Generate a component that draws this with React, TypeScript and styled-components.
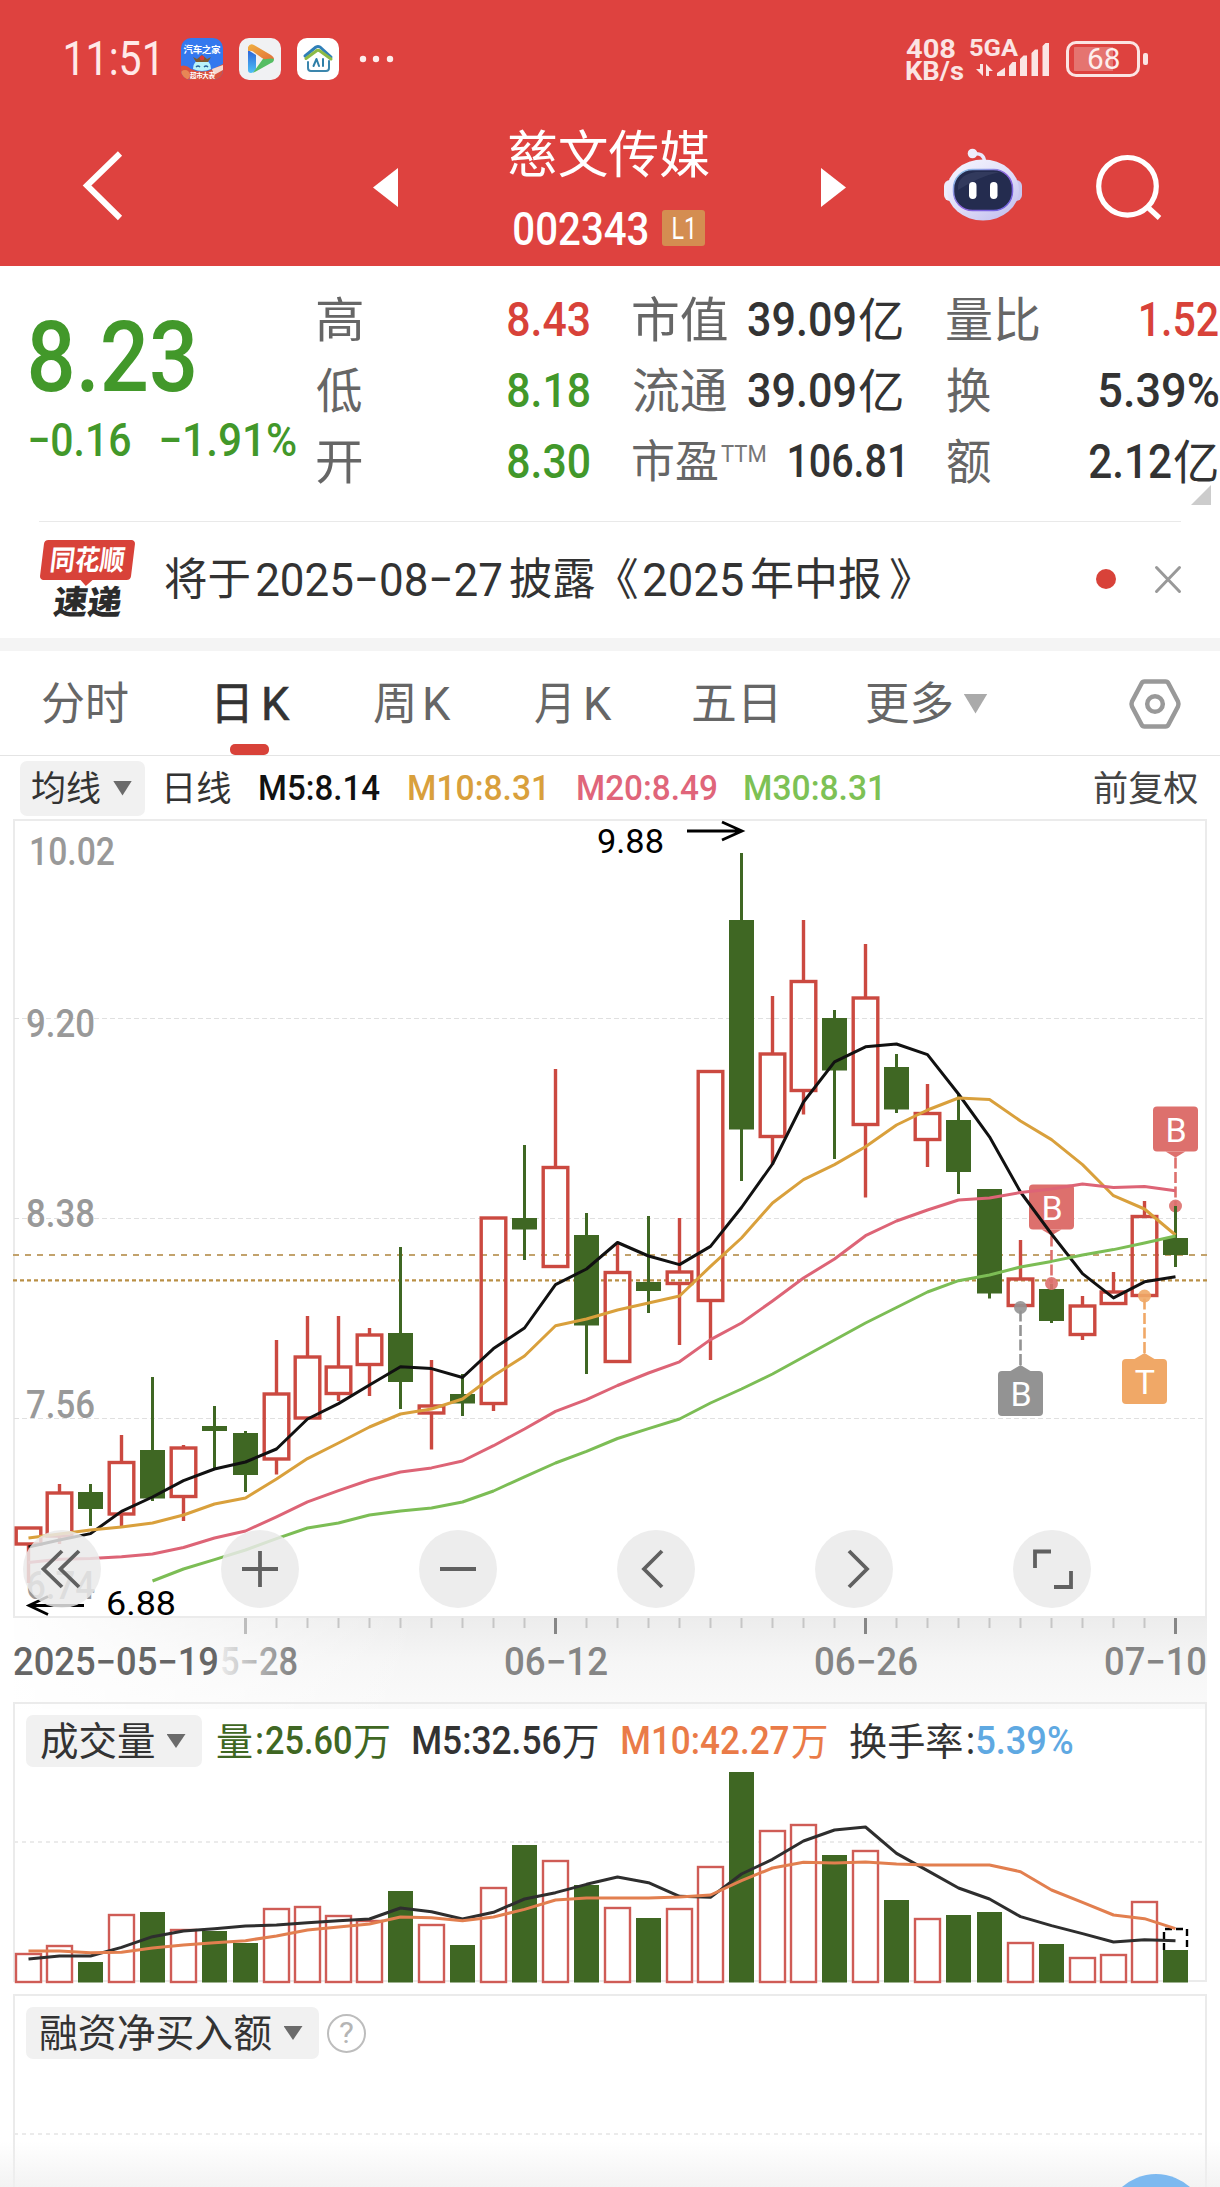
import React, { useLayoutEffect, useRef, useState } from 'react';
import styled, { createGlobalStyle } from 'styled-components';

const FONT = 'Roboto, "Noto Sans CJK SC", sans-serif';
const RED = '#d84239';
const GREEN = '#42982a';
const DARK = '#333333';
const BAR_GREEN = '#3f6723';

const Global = createGlobalStyle`
  html, body { margin: 0; background: #fff; }
  body { font-family: ${FONT}; width: 1220px; overflow: hidden; }
  * { box-sizing: border-box; }
  svg { display: block; flex: none; overflow: visible; }
`;

/* ---------- condensed text: inked width is fixed, glyphs are squeezed to it ---------- */

const FitBox = styled.span<{ $w: number; $size: number; $weight: number; $color: string; $ml: number; $up: number }>`
  display: block;
  flex: none;
  width: ${(p) => p.$w}px;
  height: ${(p) => p.$size}px;
  line-height: ${(p) => p.$size}px;
  font-size: ${(p) => p.$size}px;
  font-weight: ${(p) => p.$weight};
  color: ${(p) => p.$color};
  margin-left: ${(p) => p.$ml}px;
  margin-top: ${(p) => p.$up}px;
  white-space: nowrap;
`;
const FitInner = styled.span`
  display: inline-block;
  transform-origin: 0 50%;
`;

type FitProps = { w: number; size: number; weight?: number; color?: string; ml?: number; up?: number; children: string };

function Fit({ w, size, weight = 400, color = DARK, ml = 0, up = 0, children }: FitProps) {
  const ref = useRef<HTMLSpanElement>(null);
  const [t, setT] = useState('none');
  useLayoutEffect(() => {
    const ctx = document.createElement('canvas').getContext('2d');
    if (!ctx || !ref.current) return;
    ctx.font = `${weight} ${size}px ${FONT}`;
    const m = ctx.measureText(children);
    const ink = m.actualBoundingBoxLeft + m.actualBoundingBoxRight;
    // Han glyphs sit a little high next to the figures, so they are lowered
    const drop = /[\u3000-\u9fff]/.test(children) ? size * 0.028 : 0;
    if (ink > 0) setT(`scaleX(${w / ink}) translate(${m.actualBoundingBoxLeft}px, ${drop}px)`);
  }, [w, size, weight, children]);
  return (
    <FitBox $w={w} $size={size} $weight={weight} $color={color} $ml={ml} $up={up}>
      <FitInner ref={ref} style={{ transform: t }}>{children}</FitInner>
    </FitBox>
  );
}

/* ---------- header ---------- */

const Page = styled.main`
  width: 1220px;
  height: 2187px;
  overflow: hidden;
  background: #fff;
`;
const Header = styled.header`
  height: 266px;
  background: #de423f;
`;
const StatusBar = styled.div`
  height: 84px;
  padding: 34px 80px 0 66px;
  display: flex;
  justify-content: space-between;
`;
const StatusGroup = styled.div`
  display: flex;
  align-items: center;
  height: 50px;
`;
const AppIcons = styled.div`
  display: flex;
  gap: 16px;
  margin: 0 22px 0 24px;
`;
const Speed = styled.div`
  display: flex;
  flex-direction: column;
  width: 64px;
`;
const Battery = styled.div`
  position: relative;
  display: flex;
  align-items: center;
  justify-content: center;
  width: 74px;
  height: 36px;
  margin-left: 16px;
  border: 3.5px solid #fbe4e3;
  border-radius: 10px;
  background: linear-gradient(90deg, transparent 5px, #e57470 5px, #e57470 44px, transparent 44px) content-box;
  padding: 3px 0;
  &::after {
    content: '';
    position: absolute;
    right: -11px;
    top: 9px;
    width: 5px;
    height: 12px;
    border-radius: 2px;
    background: #fbe4e3;
  }
`;
const NavBar = styled.nav`
  display: flex;
  height: 182px;
`;
const NavTitle = styled.div`
  display: flex;
  flex-direction: column;
  width: 202px;
  margin: 44px 110px 0 111px;
`;
const CodeRow = styled.div`
  display: flex;
  align-items: center;
  height: 36px;
  margin: 30px 0 0 5px;
`;
const Level = styled.div`
  display: flex;
  align-items: center;
  justify-content: center;
  width: 43px;
  height: 36px;
  margin-left: 14px;
  border-radius: 3px;
  background: #d48d51;
`;
const NavIcon = styled.svg<{ $l: number; $t: number }>`
  margin: ${(p) => p.$t}px 0 0 ${(p) => p.$l}px;
`;

function StatusIcons() {
  return (
    <AppIcons>
      <svg width="42" height="42" viewBox="0 0 42 42">
        <defs>
          <clipPath id="appClip"><rect width="42" height="42" rx="10" /></clipPath>
        </defs>
        <g clipPath="url(#appClip)">
          <rect width="42" height="42" fill="#3478ee" />
          <path d="M0 28 Q5 26 10 31 Q21 36 32 31 L42 26 V42 H0 Z" fill="#d9503d" />
          <path d="M31 31 L42 27 V32 L33 37 Z" fill="#f4d9d0" />
          <circle cx="4" cy="37" r="5" fill="#e88655" />
          <path d="M12 31 Q12 22 21 22 Q30 22 30 31 Q21 35 12 31 Z" fill="#b9f2fa" />
          <path d="M15 29q2-2 4 0M23 29q2-2 4 0" stroke="#26629b" strokeWidth="1.4" fill="none" />
          <path d="M12 19l3 5h12l3-5-4 2-5-4-5 4z" fill="#7d5a2e" />
          <circle cx="21" cy="20" r="2.4" fill="#d63a3a" />
          <text x="2.5" y="14.5" fontSize="9.5" fontWeight="700" fill="#fff" textLength="37">汽车之家</text>
          <text x="9" y="40" fontSize="6.5" fontWeight="700" fill="#fff" textLength="25">超市大表</text>
        </g>
      </svg>
      <svg width="42" height="42" viewBox="0 0 42 42">
        <defs>
          <linearGradient id="pb" x1="0" y1="0" x2="0" y2="1"><stop offset="0" stopColor="#2b63d9" /><stop offset="1" stopColor="#4fc0f5" /></linearGradient>
          <linearGradient id="po" x1="0" y1="0" x2="1" y2="1"><stop offset="0" stopColor="#f0b040" /><stop offset="1" stopColor="#e2713a" /></linearGradient>
        </defs>
        <rect width="42" height="42" rx="10" fill="#f0f1f3" />
        <path d="M9 12 L17 17 V31 Q16 34 12 35 Q9 35 9 32 Z" fill="url(#pb)" />
        <path d="M16 32 L26 18 Q34 18 35 21 Q35 24 32 25 L14 35 Z" fill="#55bd63" />
        <path d="M9 13 V9 Q11 5 15 7 L32 17 Q35 19 35 21 Q33 20 27 21 Q26 22 23 20 L16 15 Q13 12 9 13 Z" fill="url(#po)" />
      </svg>
      <svg width="42" height="42" viewBox="0 0 42 42" fill="none" strokeLinecap="round" strokeLinejoin="round">
        <rect width="42" height="42" rx="10" fill="#fff" />
        <path d="M8 18 L19 9 Q21 8 23 9 L34 19" stroke="#2f7fb8" strokeWidth="3" />
        <path d="M9 20.5 L20 12.5 Q21.500 12 23 13 L34 21" stroke="#8dbb46" strokeWidth="3" />
        <path d="M11 24 V30 Q11 33 14 33 H29 Q32 33 32 30 V23" stroke="#3b86ad" strokeWidth="2" />
        <path d="M16.500 28 L19.500 21 L22 28 M26 21 V28" stroke="#2f7fa8" strokeWidth="2" />
      </svg>
    </AppIcons>
  );
}

function HeaderArea() {
  return (
    <Header>
      <StatusBar>
        <StatusGroup>
          <Fit w={91} size={48} color="#ffe9e8">11:51</Fit>
          <StatusIcons />
          <svg width="32" height="8" viewBox="0 0 32 8" fill="#fdeceb">
            <circle cx="2" cy="4" r="3.2" /><circle cx="15" cy="4" r="3.2" /><circle cx="29" cy="4" r="3.2" />
          </svg>
        </StatusGroup>
        <StatusGroup>
          <Speed>
            <Fit w={49} size={26} weight={700} color="#fbe4e3" up={2}>408</Fit>
            <Fit w={57} size={25} weight={700} color="#fbe4e3" up={-3}>KB/s</Fit>
          </Speed>
          <svg width="80" height="42" viewBox="971 38 80 42" fill="#fbe4e3">
            <text x="970" y="56" fontSize="24" fontWeight="700" textLength="49" lengthAdjust="spacingAndGlyphs" fontFamily="Roboto">5GA</text>
            <path d="M981 64h3v12l-7-7h4zM987 64l7 7h-4v5h-3z" />
            <path d="M998 76V73l8-5.500V76zM1010 76V66l3.500-4H1017V76zM1021 76V59l3.500-3.500H1028V76z" />
            <path d="M1032.500 76V53l3.500-3.500h3V76zM1043.500 76V46l3-3h3.500V76z" />
          </svg>
          <Battery><Fit w={31} size={29} color="#fdeeed">68</Fit></Battery>
        </StatusGroup>
      </StatusBar>
      <NavBar>
        <NavIcon $l={82} $t={66} width="42" height="72" viewBox="82 150 42 72" fill="none" stroke="#fff" strokeWidth="6">
          <path d="M120 153.500L87 185.500L120 218" />
        </NavIcon>
        <NavIcon $l={248.500} $t={84} width="25" height="39" viewBox="0 0 25 39" fill="#fff"><path d="M0 19.500L25 0V39z" /></NavIcon>
        <NavTitle>
          <Fit w={200} size={51} color="#fff" up={1}>慈文传媒</Fit>
          <CodeRow>
            <Fit w={134} size={47} weight={500} color="#fff">002343</Fit>
            <Level><Fit w={20} size={31} color="#fff">L1</Fit></Level>
          </CodeRow>
        </NavTitle>
        <NavIcon $l={0} $t={84} width="25" height="39" viewBox="0 0 25 39" fill="#fff"><path d="M25 19.500L0 0V39z" /></NavIcon>
        <NavIcon $l={98} $t={64} width="78" height="73" viewBox="944 148 78 73">
          <defs>
            <linearGradient id="shell" x1="0" y1="0" x2="0.8" y2="1"><stop offset="0" stopColor="#f7f7ff" /><stop offset="0.6" stopColor="#dedcf8" /><stop offset="1" stopColor="#c3c0ee" /></linearGradient>
            <linearGradient id="rim" x1="0" y1="0" x2="1" y2="1"><stop offset="0" stopColor="#8fd6ea" /><stop offset="0.5" stopColor="#8d63dd" /><stop offset="1" stopColor="#6a63e0" /></linearGradient>
          </defs>
          <path d="M973 154 Q984 152 984.500 162" fill="none" stroke="#e9e8fb" strokeWidth="3.500" />
          <circle cx="972.500" cy="153.500" r="4.800" fill="#eeeefc" />
          <rect x="944" y="180" width="14" height="21" rx="6" fill="#edecfb" />
          <rect x="1008" y="180" width="14" height="21" rx="6" fill="#c9c7f0" />
          <ellipse cx="983" cy="190" rx="36" ry="30.500" fill="url(#shell)" />
          <rect x="953.500" y="169.500" width="59" height="41" rx="19" fill="#242c4f" stroke="url(#rim)" strokeWidth="1.500" />
          <path d="M958 186 Q960 174 976 172 L1000 172 Q980 176 958 190Z" fill="#3c4567" opacity=".6" />
          <rect x="969" y="182" width="7.500" height="17" rx="3.700" fill="#fff" />
          <rect x="990" y="182" width="7.500" height="17" rx="3.700" fill="#fff" />
        </NavIcon>
        <NavIcon $l={74} $t={70} width="66" height="66" viewBox="1096 154 66 66" fill="none" stroke="#fff" strokeWidth="5.200">
          <circle cx="1127.500" cy="186.300" r="28.800" /><path d="M1147.500 207L1159.500 218" />
        </NavIcon>
      </NavBar>
    </Header>
  );
}

/* ---------- quote ---------- */

const Quote = styled.section`
  position: relative;
  display: flex;
  height: 255px;
`;
const PriceBlock = styled.div`
  flex: none;
  width: 317px;
  padding: 43px 0 0 30px;
`;
const ChangeRow = styled.div`
  display: flex;
  gap: 30px;
  margin-top: 10px;
`;
const StatColumn = styled.div<{ $w: number; $ml: number }>`
  flex: none;
  width: ${(p) => p.$w}px;
  margin-left: ${(p) => p.$ml}px;
  padding-top: 18px;
`;
const StatRow = styled.div`
  display: flex;
  justify-content: space-between;
  align-items: center;
  height: 71px;
`;
const Run = styled.div`
  display: flex;
  align-items: center;
`;
const Corner = styled.i`
  position: absolute;
  right: 9px;
  bottom: 16px;
  width: 20px;
  height: 20px;
  background: #ccc;
  clip-path: polygon(100% 0, 100% 100%, 0 100%);
`;

const Label = ({ w, children }: { w: number; children: string }) => <Fit w={w} size={48} color="#666">{children}</Fit>;
const Value = ({ w, color = DARK, unit, children }: { w: number; color?: string; unit?: boolean; children: string }) => (
  <Run>
    <Fit w={w} size={49} weight={500} color={color}>{children}</Fit>
    {unit && <Fit w={43.500} size={47} color={DARK} ml={4}>亿</Fit>}
  </Run>
);

function QuoteArea() {
  return (
    <Quote>
      <PriceBlock>
        <Fit w={164} size={98} weight={500} color={GREEN}>8.23</Fit>
        <ChangeRow>
          <Fit w={100.500} size={46} weight={500} color={GREEN}>−0.16</Fit>
          <Fit w={134.500} size={46} weight={500} color={GREEN}>−1.91%</Fit>
        </ChangeRow>
      </PriceBlock>
      <StatColumn $w={272.500} $ml={0}>
        <StatRow><Label w={44.500}>高</Label><Value w={81.500} color={RED}>8.43</Value></StatRow>
        <StatRow><Label w={44.500}>低</Label><Value w={81.500} color={GREEN}>8.18</Value></StatRow>
        <StatRow><Label w={44.500}>开</Label><Value w={81.500} color={GREEN}>8.30</Value></StatRow>
      </StatColumn>
      <StatColumn $w={269.500} $ml={43}>
        <StatRow><Label w={93.500}>市值</Label><Value w={106.500} unit>39.09</Value></StatRow>
        <StatRow><Label w={93.500}>流通</Label><Value w={106.500} unit>39.09</Value></StatRow>
        <StatRow>
          <Run>
            <Fit w={85} size={45} color="#666">市盈</Fit>
            <Fit w={44} size={24} color="#777" ml={3} up={-16}>TTM</Fit>
          </Run>
          <Fit w={113.500} size={45.500} weight={500}>106.81</Fit>
        </StatRow>
      </StatColumn>
      <StatColumn $w={271} $ml={44.500}>
        <StatRow><Label w={92}>量比</Label><Value w={76.500} color={RED}>1.52</Value></StatRow>
        <StatRow><Label w={43.500}>换</Label><Value w={118}>5.39%</Value></StatRow>
        <StatRow><Label w={43.500}>额</Label><Value w={81.500} unit>2.12</Value></StatRow>
      </StatColumn>
      <Corner />
    </Quote>
  );
}

/* ---------- notice ---------- */

const Notice = styled.section`
  display: flex;
  align-items: center;
  height: 117px;
  margin: 0 39px;
  padding-bottom: 2px;
  border-top: 1px solid #e9e9e9;
`;
const Brand = styled.div`
  width: 91px;
  height: 78px;
  margin: 0 32px 0 3px;
`;
const BrandTag = styled.div`
  position: relative;
  display: flex;
  align-items: center;
  justify-content: center;
  height: 40px;
  border-radius: 4px;
  background: ${RED};
  transform: skewX(-7deg);
  &::after {
    content: '';
    position: absolute;
    left: 40px;
    top: 39px;
    border: 7px solid transparent;
    border-top-color: ${RED};
  }
`;
const BrandSub = styled.div`
  display: flex;
  justify-content: center;
  margin-top: 5px;
  transform: skewX(-7deg);
`;
const Dot = styled.i`
  width: 20px;
  height: 20px;
  margin: 0 39px 0 auto;
  border-radius: 50%;
  background: ${RED};
`;
const Strip = styled.div`
  height: 13px;
  background: #f4f4f4;
`;

function NoticeArea() {
  return (
    <Notice>
      <Brand>
        <BrandTag><Fit w={72} size={28} weight={700} color="#fff">同花顺</Fit></BrandTag>
        <BrandSub><Fit w={68} size={33} weight={900} color="#2c2c2c">速递</Fit></BrandSub>
      </Brand>
      <Fit w={84} size={44}>将于</Fit>
      <Fit w={244.500} size={47} ml={8}>2025−08−27</Fit>
      <Fit w={84.500} size={44} ml={8.500}>披露</Fit>
      <Fit w={20.500} size={44} ml={22}>《</Fit>
      <Fit w={99} size={47} ml={7}>2025</Fit>
      <Fit w={129} size={44} ml={8.500}>年中报</Fit>
      <Fit w={20.500} size={44} ml={9}>》</Fit>
      <Dot />
      <svg width="26" height="27" viewBox="0 0 26 27" stroke="#999" strokeWidth="3" strokeLinecap="round"><path d="M1.500 1.500L24.500 25.500M24.500 1.500L1.500 25.500" /></svg>
    </Notice>
  );
}

/* ---------- tabs ---------- */

const Tabs = styled.nav`
  display: flex;
  height: 105px;
  padding-left: 42px;
  border-bottom: 1px solid #e4e4e4;
`;
const Tab = styled.div<{ $ml: number; $active?: boolean }>`
  position: relative;
  display: flex;
  align-items: center;
  height: 105px;
  margin-left: ${(p) => p.$ml}px;
  ${(p) => p.$active && `
    -webkit-text-stroke: 0.6px ${DARK};
    &::after {
      content: '';
      position: absolute;
      left: 13px;
      bottom: 1px;
      width: 39px;
      height: 11px;
      border-radius: 5px;
      background: ${RED};
    }
  `}
`;
const Caret = styled.i<{ $w: number; $h: number; $ml: number; $color: string }>`
  width: ${(p) => p.$w}px;
  height: ${(p) => p.$h}px;
  margin-left: ${(p) => p.$ml}px;
  background: ${(p) => p.$color};
  clip-path: polygon(0 0, 100% 0, 50% 100%);
`;

function TabArea() {
  const g = '#666';
  return (
    <Tabs>
      <Tab $ml={0}><Fit w={86} size={45} color={g}>分时</Fit></Tab>
      <Tab $ml={89} $active><Fit w={30} size={45}>日</Fit><Fit w={26} size={47} ml={17}>K</Fit></Tab>
      <Tab $ml={83.500}><Fit w={38.500} size={45} color={g}>周</Fit><Fit w={26} size={47} ml={13} color={g}>K</Fit></Tab>
      <Tab $ml={84}><Fit w={33.500} size={45} color={g}>月</Fit><Fit w={26} size={47} ml={17} color={g}>K</Fit></Tab>
      <Tab $ml={81.500}><Fit w={82.500} size={45} color={g}>五日</Fit></Tab>
      <Tab $ml={91}><Fit w={85} size={45} color={g}>更多</Fit><Caret $w={24} $h={20} $ml={12} $color="#aaa" /></Tab>
      <Tab $ml={141.500}>
        <svg width="52" height="50" viewBox="0 0 52 50" fill="none" stroke="#999" strokeWidth="4.500" strokeLinejoin="round">
          <path d="M15.500 2.500H36.500Q38.500 2.500 39.500 4.500L49 22.500Q50 25 49 27.500L39.500 45.500Q38.500 47.500 36.500 47.500H15.500Q13.500 47.500 12.500 45.500L3 27.500Q2 25 3 22.500L12.500 4.500Q13.500 2.500 15.500 2.500Z" />
          <circle cx="26" cy="25" r="7.800" />
        </svg>
      </Tab>
    </Tabs>
  );
}

/* ---------- indicator bar ---------- */

const Indicators = styled.div`
  display: flex;
  align-items: center;
  height: 63px;
  padding: 1px 0 0 20px;
`;
const Chip = styled.div<{ $w: number; $h: number; $pl: number }>`
  display: flex;
  align-items: center;
  flex: none;
  width: ${(p) => p.$w}px;
  height: ${(p) => p.$h}px;
  padding-left: ${(p) => p.$pl}px;
  border-radius: 7px;
  background: #f1f1f1;
`;

function IndicatorArea() {
  return (
    <Indicators>
      <Chip $w={125} $h={55} $pl={12}>
        <Fit w={68} size={35}>均线</Fit>
        <Caret $w={19} $h={15} $ml={13} $color="#6b6b6b" />
      </Chip>
      <Fit w={63.500} size={35} ml={21.500}>日线</Fit>
      <Fit w={120} size={35} weight={500} color="#111" ml={30}>M5:8.14</Fit>
      <Fit w={135.500} size={35} weight={500} color="#d9a03c" ml={29}>M10:8.31</Fit>
      <Fit w={138} size={35} weight={500} color="#e0657a" ml={33}>M20:8.49</Fit>
      <Fit w={135.500} size={35} weight={500} color="#7dc155" ml={29.500}>M30:8.31</Fit>
      <Fit w={103.500} size={35} color="#444" ml={213.500}>前复权</Fit>
    </Indicators>
  );
}

/* ---------- candlestick chart ---------- */

const px = (i: number) => 28.5 + 31 * i;
const line = (ys: number[], from = 0) => ys.map((y, k) => `${px(k + from)},${y}`).join(' ');

// [rising, body top, body bottom, wick top, wick bottom]
const candles: [number, number, number, number, number][] = [
  [1, 1528, 1544, 1528, 1583], [1, 1493, 1536, 1484, 1544], [0, 1492, 1509, 1484, 1526], [1, 1462.5, 1514, 1435, 1526],
  [0, 1450, 1498.5, 1377, 1501], [1, 1448, 1496.5, 1445, 1521], [0, 1426, 1431, 1406, 1468], [0, 1433, 1475, 1431, 1492],
  [1, 1394, 1459, 1340, 1474.5], [1, 1357, 1418, 1316, 1418], [1, 1367, 1393.5, 1316, 1401], [1, 1335, 1364.5, 1328, 1396],
  [0, 1333, 1382, 1247, 1409], [1, 1406, 1413, 1360, 1449.5], [0, 1394, 1403.5, 1374, 1416], [1, 1218, 1403.5, 1218, 1411],
  [0, 1218, 1229.5, 1145, 1260], [1, 1167.5, 1266.5, 1069, 1266], [0, 1235, 1325.5, 1213, 1374], [1, 1272.5, 1361.5, 1243, 1361],
  [0, 1282, 1291, 1216, 1313], [1, 1272, 1283.5, 1218, 1345], [1, 1071.5, 1300.5, 1071, 1360], [0, 920, 1129.5, 853, 1181],
  [1, 1054, 1136.5, 996, 1164.5], [1, 981.5, 1090.5, 920, 1114.5], [0, 1018, 1070.5, 1010, 1159], [1, 998, 1124.5, 944, 1197.5],
  [0, 1067, 1109.5, 1054, 1113], [1, 1113.5, 1139.5, 1084, 1167], [0, 1120, 1172, 1094, 1194], [0, 1189, 1293.5, 1189, 1298.5],
  [1, 1279, 1305.5, 1240, 1306], [0, 1289, 1321, 1284, 1323], [1, 1306, 1334.5, 1296, 1340], [1, 1292, 1303.5, 1272, 1305],
  [1, 1216.5, 1295.5, 1201, 1296], [0, 1238, 1255, 1206, 1267],
];
const ma5 = [1547, 1540, 1533.6, 1511.4, 1497, 1480.7, 1469, 1462, 1449, 1419, 1403.6, 1385, 1366.8, 1368.6, 1377.5, 1348.6, 1328, 1284.6, 1269, 1242.5, 1256, 1264.6, 1246.4, 1207.5, 1164, 1102, 1061.8, 1046.8, 1044, 1054.6, 1094, 1136.8, 1192, 1234, 1273.6, 1297.9, 1281.8, 1276.8];
const ma10 = [1538, 1534, 1530, 1527, 1523, 1515, 1504, 1498, 1479, 1458.6, 1443, 1427, 1414, 1409, 1399, 1375.7, 1356, 1325.7, 1319, 1310, 1303, 1296, 1266.4, 1238, 1203, 1179.6, 1164.6, 1146.8, 1125, 1110, 1098, 1099.6, 1121, 1139.6, 1164.6, 1195.7, 1209, 1235];
const ma20 = [1562.5, 1559.3, 1558.6, 1556.8, 1554, 1547.5, 1538, 1531, 1516.8, 1501.8, 1490.7, 1480, 1472, 1467.9, 1461, 1445.7, 1429, 1411.4, 1399.6, 1385.5, 1373, 1361.8, 1339.6, 1323, 1301, 1278, 1259, 1235.7, 1221, 1210, 1200, 1198, 1192.5, 1189, 1184, 1187.5, 1186.4, 1190.7];
const ma30 = [1581, 1569, 1559.6, 1550, 1538.6, 1528, 1523, 1515, 1511, 1508, 1502, 1491, 1476.8, 1463, 1451.4, 1438.5, 1428.6, 1419, 1403, 1389, 1374, 1357, 1340, 1323, 1307.5, 1292, 1280.7, 1275, 1267, 1261.4, 1255, 1249.6, 1243, 1236];

const ChartArea = styled.section`
  position: relative;
  height: 883px;
`;
const SvgText = styled.text`
  font-family: ${FONT};
`;
const ToolRow = styled.div`
  position: absolute;
  left: 23px;
  top: 711px;
  display: flex;
  gap: 120px;
`;
const RoundTool = styled.button`
  display: flex;
  width: 78px;
  height: 78px;
  padding: 0;
  border: 0;
  border-radius: 50%;
  background: rgba(233, 233, 233, 0.84);
`;

const ScaleText = ({ x, y, w, size = 38, weight = 500, fill = '#999', children }: { x: number; y: number; w: number; size?: number; weight?: number; fill?: string; children: string }) => (
  <SvgText x={x - 2} y={y} fontSize={size} fontWeight={weight} fill={fill} textLength={w + 4} lengthAdjust="spacingAndGlyphs">{children}</SvgText>
);

function Marker({ i, dot, box, up, color, letter }: { i: number; dot: number; box: number; up?: boolean; color: string; letter: string }) {
  const x = px(i);
  const edge = up ? box : box + 45;
  const tip = up ? box - 6 : box + 51;
  return (
    <g>
      <path d={`M${x} ${tip}V${dot}`} stroke={color} strokeWidth="2.600" strokeDasharray="11 3.500" />
      <circle cx={x} cy={dot} r="6.500" fill={color} opacity=".9" />
      <path d={`M${x - 10} ${edge}L${x} ${tip}L${x + 10} ${edge}Z`} fill={color} />
      <rect x={x - 22.5} y={box} width="45" height="45" rx="4" fill={color} />
      <SvgText x={x + 0.5} y={box + 35} fontSize="34" textAnchor="middle" fill="#fff">{letter}</SvgText>
    </g>
  );
}

function CandleChart() {
  const tools = [
    'M39 21L20.500 39L39 57M56 21L37.500 39L56 57',
    'M21 39H57M39 21V57',
    'M21 39H57',
    'M45 21L27 39L45 57',
    'M34 21L52 39L34 57',
    'M38 21.500H22V38M41 57H58V41',
  ];
  return (
    <ChartArea>
      <svg width="1220" height="883" viewBox="0 819 1220 883">
        <defs>
          <linearGradient id="axisY" x1="0" y1="0" x2="0" y2="1"><stop offset="0" stopColor="#ececec" /><stop offset="0.5" stopColor="#f6f6f6" /><stop offset="1" stopColor="#fafafa" /></linearGradient>
          <linearGradient id="axisX" x1="0" y1="0" x2="1" y2="0"><stop offset="0" stopColor="#fff" /><stop offset="1" stopColor="#fff" stopOpacity="0" /></linearGradient>
          <linearGradient id="fade" gradientUnits="userSpaceOnUse" x1="210" y1="0" x2="300" y2="0"><stop offset="0" stopColor="#858585" stopOpacity="0" /><stop offset="0.9" stopColor="#858585" /></linearGradient>
        </defs>
        <rect x="14" y="1617" width="1193" height="92" fill="url(#axisY)" />
        <rect x="0" y="1617" width="420" height="92" fill="url(#axisX)" />
        <rect x="14" y="820" width="1192" height="797" fill="#fff" stroke="#ebebeb" strokeWidth="2" />
        {[1018, 1218, 1418].map((y) => <path key={y} d={`M14 ${y + 0.5}H1206`} stroke="#e0e0e0" strokeWidth="1.200" strokeDasharray="5 3" />)}
        <ScaleText x={31} y={865} w={82}>10.02</ScaleText>
        <ScaleText x={28} y={1037} w={65}>9.20</ScaleText>
        <ScaleText x={28} y={1227} w={65}>8.38</ScaleText>
        <ScaleText x={28} y={1418} w={65}>7.56</ScaleText>
        <ScaleText x={28} y={1599} w={65}>6.74</ScaleText>
        <path d="M13 1255H1207" stroke="#c2a26c" strokeWidth="2" strokeDasharray="6 6" />
        <path d="M13 1280.300H1207" stroke="#b98f45" strokeWidth="2.200" strokeDasharray="4 3" />
        {candles.map(([up, t, b, wt, wb], i) => up ? (
          <g key={i} stroke="#cb4940" strokeWidth="3.400" fill="none">
            {wt < t && <path d={`M${px(i)} ${wt}V${t}`} />}
            {wb > b && <path d={`M${px(i)} ${b}V${wb}`} />}
            <rect x={px(i) - 12.3} y={t} width="24.600" height={b - t} />
          </g>
        ) : (
          <g key={i} fill={BAR_GREEN}>
            <rect x={px(i) - 1.5} y={wt} width="3" height={wb - wt} />
            <rect x={px(i) - 12.5} y={t} width="25" height={b - t} />
          </g>
        ))}
        <Marker i={37} dot={1206} box={1106.5} color="#dd706d" letter="B" />
        <Marker i={33} dot={1283.5} box={1184.5} color="#dd706d" letter="B" />
        <Marker i={32} dot={1307.5} box={1371} up color="#939393" letter="B" />
        <Marker i={36} dot={1296} box={1359} up color="#f0a867" letter="T" />
        <rect x={px(37) - 1.5} y={1206} width="3" height={32} fill={BAR_GREEN} />
        <g fill="none" strokeWidth="3" strokeLinejoin="round">
          <polyline points={line(ma5)} stroke="#111" />
          <polyline points={line(ma10)} stroke="#d9a03c" />
          <polyline points={line(ma20)} stroke="#dd6476" />
          <polyline points={line(ma30, 4)} stroke="#7cbd55" />
        </g>
        <g fill="none" stroke="#000" strokeWidth="2.800">
          <path d="M687 831H742M722 822L742 831L722 840" />
          <path d="M84 1605.500H29M48 1596.500L29 1605.500L48 1614.500" />
        </g>
        <ScaleText x={599} y={853} w={63} size={34} weight={400} fill="#000">9.88</ScaleText>
        <ScaleText x={108} y={1614.5} w={66} size={33} weight={400} fill="#000">6.88</ScaleText>
        {Array.from({ length: 31 }, (_, k) => k + 7).map((i) => {
          const major = i % 10 === 7;
          return <path key={i} d={`M${px(i)} 1618V${major ? 1634 : 1628}`} stroke={major ? (i === 7 ? '#bdbdbd' : '#868686') : '#c6c6c6'} strokeWidth={major ? 3 : 2} />;
        })}
        <ScaleText x={222} y={1675} w={74} fill="url(#fade)">5−28</ScaleText>
        <ScaleText x={15} y={1675} w={202} fill="#666">2025−05−19</ScaleText>
        <ScaleText x={506} y={1675} w={100} fill="#858585">06−12</ScaleText>
        <ScaleText x={816} y={1675} w={100} fill="#858585">06−26</ScaleText>
        <ScaleText x={1106} y={1675} w={99} fill="#858585">07−10</ScaleText>
      </svg>
      <ToolRow>
        {tools.map((d) => (
          <RoundTool key={d}>
            <svg width="78" height="78" viewBox="0 0 78 78" fill="none" stroke="#606060" strokeWidth="3.800"><path d={d} /></svg>
          </RoundTool>
        ))}
      </ToolRow>
    </ChartArea>
  );
}

/* ---------- volume & financing panels ---------- */

const Panel = styled.section<{ $h: number; $open?: boolean }>`
  position: relative;
  width: 1194px;
  height: ${(p) => p.$h}px;
  margin-left: 13px;
  border: 2px solid #ebebeb;
  ${(p) => p.$open && 'border-bottom: 0; margin-top: 12px;'}
`;
const PanelHead = styled.div`
  display: flex;
  align-items: center;
  height: 63px;
  padding: 11px 0 0 11px;
`;

const volumes: [number, number][] = [
  [1, 1954], [1, 1946], [0, 1962], [1, 1915], [0, 1912], [1, 1930], [0, 1931], [0, 1943], [1, 1909], [1, 1907],
  [1, 1916], [1, 1921], [0, 1891], [1, 1925], [0, 1945], [1, 1888], [0, 1845], [1, 1861], [0, 1885], [1, 1908],
  [0, 1918], [1, 1909], [1, 1867], [0, 1772], [1, 1831], [1, 1825], [0, 1855], [1, 1851], [0, 1900], [1, 1919],
  [0, 1915], [0, 1912], [1, 1943], [0, 1944], [1, 1958], [1, 1955], [1, 1902], [0, 1950],
];
const third = (v: number[]) => v.map((p) => 1690 + p / 3);
const vol5 = third([807, 798, 798, 772, 740, 723, 716, 708, 705, 698, 692, 687, 654, 665, 687, 667, 627, 608, 583, 561, 578, 619, 622, 552, 508, 453, 420, 411, 490, 542, 594, 627, 680, 707, 731, 756, 749, 752]);
const vol10 = third([783, 783, 788, 787, 774, 765, 758, 752, 738, 720, 711, 702, 681, 683, 692, 681, 658, 630, 624, 624, 624, 621, 615, 572, 534, 517, 519, 516, 522, 525, 525, 525, 545, 600, 637, 675, 686, 716]);

function VolumePanel() {
  return (
    <Panel $h={280}>
      <PanelHead>
        <Chip $w={176} $h={52} $pl={15}>
          <Fit w={113.500} size={39}>成交量</Fit>
          <Caret $w={19} $h={14} $ml={12} $color="#6b6b6b" />
        </Chip>
        <Fit w={35} size={38} color={BAR_GREEN} ml={15}>量</Fit>
        <Fit w={5} size={39} weight={500} color={BAR_GREEN} ml={4.500}>:</Fit>
        <Fit w={85.500} size={39} weight={500} color={BAR_GREEN} ml={4}>25.60</Fit>
        <Fit w={35} size={38} color={BAR_GREEN} ml={3}>万</Fit>
        <Fit w={147.500} size={39} weight={500} ml={23.500}>M5:32.56</Fit>
        <Fit w={34.500} size={38} ml={3}>万</Fit>
        <Fit w={166.500} size={39} weight={500} color="#ea7b48" ml={24}>M10:42.27</Fit>
        <Fit w={34.500} size={38} color="#ea7b48" ml={4}>万</Fit>
        <Fit w={112.500} size={38} ml={23}>换手率</Fit>
        <Fit w={5} size={39} weight={500} ml={5.500}>:</Fit>
        <Fit w={95} size={39} weight={500} color="#5fa9e2" ml={4}>5.39%</Fit>
      </PanelHead>
      <svg width="1190" height="215" viewBox="15 1767 1190 215">
        <path d="M14 1842H1206" stroke="#ebebeb" strokeWidth="2" strokeDasharray="4 4" />
        {volumes.map(([up, y], i) => up
          ? <rect key={i} x={px(i) - 12.5} y={y} width="25" height={1982 - y} fill="#fff" stroke="#cf5c56" strokeWidth="2.400" />
          : <rect key={i} x={px(i) - 12.5} y={y} width="25" height={1982.5 - y} fill={BAR_GREEN} />)}
        <rect x={px(37) - 12} y="1929" width="23.500" height="21" fill="#fff" />
        <path d={`M${px(37) - 11.5} 1950V1929H${px(37) + 11.5}V1950`} fill="none" stroke="#000" strokeWidth="2.400" strokeDasharray="7 4" />
        <g fill="none" strokeWidth="3" strokeLinejoin="round">
          <polyline points={line(vol5)} stroke="#2e2e2e" />
          <polyline points={line(vol10)} stroke="#e27f4f" />
        </g>
      </svg>
    </Panel>
  );
}

const FadeOut = styled.div`
  position: absolute;
  left: -15px;
  bottom: 0;
  width: 1220px;
  height: 46px;
  background: linear-gradient(rgba(240, 240, 240, 0), rgba(240, 240, 240, 0.8));
`;
const FloatBall = styled.i`
  position: absolute;
  right: -2px;
  top: 178px;
  width: 102px;
  height: 102px;
  border-radius: 50%;
  background: #7db9f0;
`;
const Help = styled.div`
  display: flex;
  align-items: center;
  justify-content: center;
  width: 39px;
  height: 39px;
  margin-left: 8px;
  border: 2.5px solid #bdbdbd;
  border-radius: 50%;
`;

function FinancePanel() {
  return (
    <Panel $h={193} $open>
      <PanelHead>
        <Chip $w={293} $h={52} $pl={15}>
          <Fit w={230} size={39}>融资净买入额</Fit>
          <Caret $w={19} $h={14} $ml={12.500} $color="#6b6b6b" />
        </Chip>
        <Help><Fit w={13} size={29} color="#b5b5b5">?</Fit></Help>
      </PanelHead>
      <svg width="1190" height="128" viewBox="15 2059 1190 128">
        <path d="M14 2134H1206" stroke="#ebebeb" strokeWidth="2" strokeDasharray="4 4" />
      </svg>
      <FadeOut />
      <FloatBall />
    </Panel>
  );
}

export default function App() {
  return (
    <Page>
      <Global />
      <HeaderArea />
      <QuoteArea />
      <NoticeArea />
      <Strip />
      <TabArea />
      <IndicatorArea />
      <CandleChart />
      <VolumePanel />
      <FinancePanel />
    </Page>
  );
}
